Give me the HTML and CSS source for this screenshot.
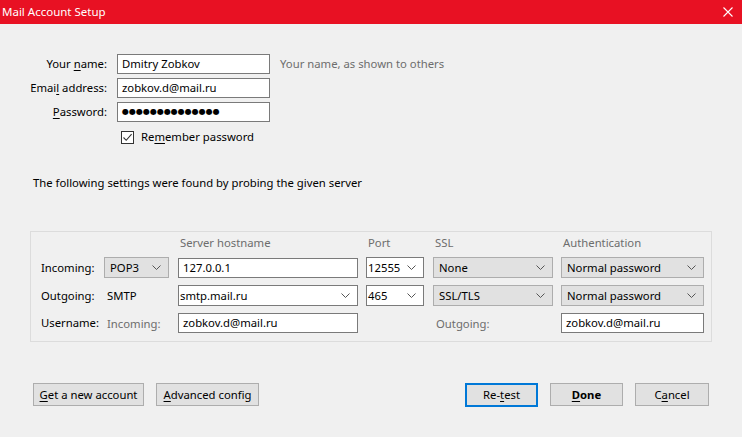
FILE: index.html
```html
<!DOCTYPE html>
<html>
<head>
<meta charset="utf-8">
<link rel="stylesheet" href="styles.css">
</head>
<body>
<div class="titlebar">
  <span class="title">Mail Account Setup</span>
  <svg class="close" width="10" height="10" viewBox="0 0 10 10"><path d="M0.5 0.5L9.5 9.5M9.5 0.5L0.5 9.5" stroke="#fff" stroke-width="1.1"/></svg>
</div>
<div class="content">
  <div class="form">
    <label class="lbl">Your <u>n</u>ame:</label>
    <div class="field">Dmitry Zobkov</div>
    <span class="hint">Your name, as shown to others</span>
    <label class="lbl">Emai<u>l</u> address:</label>
    <div class="field">zobkov.d@mail.ru</div>
    <span></span>
    <label class="lbl"><u>P</u>assword:</label>
    <div class="field pw">●●●●●●●●●●●●●●</div>
    <span></span>
    <span></span>
    <div class="remember">
      <span class="checkbox"><svg width="11" height="11" viewBox="0 0 11 11"><path d="M1.5 5.5L4.2 8.3L9.6 2.2" fill="none" stroke="#333" stroke-width="1.1"/></svg></span>
      <span>Re<u>m</u>ember password</span>
    </div>
  </div>

  <p class="found">The following settings were found by probing the given server</p>

  <div class="group">
    <span></span><span></span>
    <span class="head">Server hostname</span>
    <span class="head">Port</span>
    <span class="head">SSL</span>
    <span class="head">Authentication</span>

    <span class="rowlbl">Incoming:</span>
    <div class="select gray w65"><span>POP3</span><svg class="chev" width="9" height="5" viewBox="0 0 9 5"><path d="M0.5 0.5L4.5 4.5L8.5 0.5" fill="none" stroke="#555"/></svg></div>
    <div class="field w180">127.0.0.1</div>
    <div class="select white w58"><span>12555</span><svg class="chev" width="9" height="5" viewBox="0 0 9 5"><path d="M0.5 0.5L4.5 4.5L8.5 0.5" fill="none" stroke="#555"/></svg></div>
    <div class="select gray w120"><span>None</span><svg class="chev" width="9" height="5" viewBox="0 0 9 5"><path d="M0.5 0.5L4.5 4.5L8.5 0.5" fill="none" stroke="#555"/></svg></div>
    <div class="select gray w143"><span>Normal password</span><svg class="chev" width="9" height="5" viewBox="0 0 9 5"><path d="M0.5 0.5L4.5 4.5L8.5 0.5" fill="none" stroke="#555"/></svg></div>

    <span class="rowlbl">Outgoing:</span>
    <span class="plain">SMTP</span>
    <div class="select white w180"><span>smtp.mail.ru</span><svg class="chev" width="9" height="5" viewBox="0 0 9 5"><path d="M0.5 0.5L4.5 4.5L8.5 0.5" fill="none" stroke="#555"/></svg></div>
    <div class="select white w58"><span>465</span><svg class="chev" width="9" height="5" viewBox="0 0 9 5"><path d="M0.5 0.5L4.5 4.5L8.5 0.5" fill="none" stroke="#555"/></svg></div>
    <div class="select gray w120"><span>SSL/TLS</span><svg class="chev" width="9" height="5" viewBox="0 0 9 5"><path d="M0.5 0.5L4.5 4.5L8.5 0.5" fill="none" stroke="#555"/></svg></div>
    <div class="select gray w143"><span>Normal password</span><svg class="chev" width="9" height="5" viewBox="0 0 9 5"><path d="M0.5 0.5L4.5 4.5L8.5 0.5" fill="none" stroke="#555"/></svg></div>

    <span class="rowlbl">Username:</span>
    <span class="plain muted">Incoming:</span>
    <div class="field w180">zobkov.d@mail.ru</div>
    <span></span>
    <span class="plain muted">Outgoing:</span>
    <div class="field w143">zobkov.d@mail.ru</div>
  </div>

  <div class="buttons">
    <div class="left">
      <button class="btn b-new"><u>G</u>et a new account</button>
      <button class="btn b-adv"><u>A</u>dvanced config</button>
    </div>
    <div class="right">
      <button class="btn b-retest">Re-<u>t</u>est</button>
      <button class="btn b-done"><b><u>D</u>one</b></button>
      <button class="btn b-cancel">C<u>a</u>ncel</button>
    </div>
  </div>
</div>
</body>
</html>
```
FILE: styles.css
```css
* { box-sizing: border-box; }
html, body { margin: 0; padding: 0; }
body {
  width: 742px;
  height: 437px;
  background: #f0f0f0;
  font-family: "Noto Sans", "Open Sans", sans-serif;
  font-size: 11.3px;
  color: #000;
  overflow: hidden;
}
u { text-decoration: underline; text-underline-offset: 2px; }

.titlebar {
  height: 24px;
  background: #e81123;
  color: #fff;
  display: flex;
  align-items: center;
  justify-content: space-between;
  padding: 0 9px 0 2px;
}
.title { font-size: 11.5px; line-height: 24px; }
.close { margin-top: -1px; }

.content { padding-top: 30px; }

.form {
  display: grid;
  grid-template-columns: 107px 153px auto;
  column-gap: 10px;
  row-gap: 4px;
  align-items: center;
}
.lbl { text-align: right; line-height: 20px; white-space: nowrap; }
.hint { color: #6d6d6d; line-height: 20px; }
.field {
  height: 20px;
  background: #fff;
  border: 1px solid #7a7a7a;
  padding: 0 4px;
  line-height: 18px;
  white-space: nowrap;
  overflow: hidden;
}
.field.pw { font-family: "DejaVu Sans", sans-serif; font-size: 8px; letter-spacing: 0; line-height: 18px; padding-left: 4px; }
.remember {
  display: flex;
  align-items: center;
  gap: 7px;
  margin-top: 3px;
  padding-left: 4px;
  line-height: 16px;
}
.checkbox {
  width: 13px;
  height: 13px;
  border: 1px solid #333;
  background: #fff;
  display: flex;
  align-items: center;
  justify-content: center;
}

.found { margin: 30px 0 0 33px; line-height: 16px; }

.group {
  margin: 40px 30px 0 30px;
  width: 682px;
  height: 111px;
  border: 1px solid #dcdcdc;
  display: grid;
  grid-template-columns: 63px 74px 188px 67px 128px 143px;
  grid-template-rows: 15px 21px 21px 20px;
  row-gap: 7px;
  padding: 3px 0 0 10px;
  align-items: center;
}
.head { color: #6d6d6d; padding-left: 2px; line-height: 15px; align-self: end; }
.rowlbl { line-height: 20px; white-space: nowrap; }
.plain { padding-left: 3px; white-space: nowrap; }
.muted { color: #6d6d6d; }

.select {
  height: 21px;
  display: flex;
  align-items: center;
  justify-content: space-between;
  padding: 0 7px 0 5px;
  white-space: nowrap;
}
.select.gray { background: #e1e1e1; border: 1px solid #adadad; }
.select.white { background: #fff; border: 1px solid #7a7a7a; padding-left: 1px; }
.chev { display: block; }
.group .field { height: 20px; }
.w65 { width: 65px; }
.w180 { width: 180px; }
.w58 { width: 58px; }
.w120 { width: 120px; }
.w143 { width: 143px; }

.buttons {
  display: flex;
  justify-content: space-between;
  margin: 41px 33px 0 33px;
}
.left, .right { display: flex; gap: 12px; }
.btn {
  font-family: inherit;
  font-size: 11.3px;
  color: #000;
  height: 23px;
  background: #e1e1e1;
  border: 1px solid #adadad;
  padding: 0;
  line-height: 20px;
}
.b-new { width: 111px; }
.b-adv { width: 103px; }
.b-retest { width: 73px; border: 2px solid #0078d7; height: 24px; }
.b-done { width: 73px; }
.b-cancel { width: 74px; }
```
